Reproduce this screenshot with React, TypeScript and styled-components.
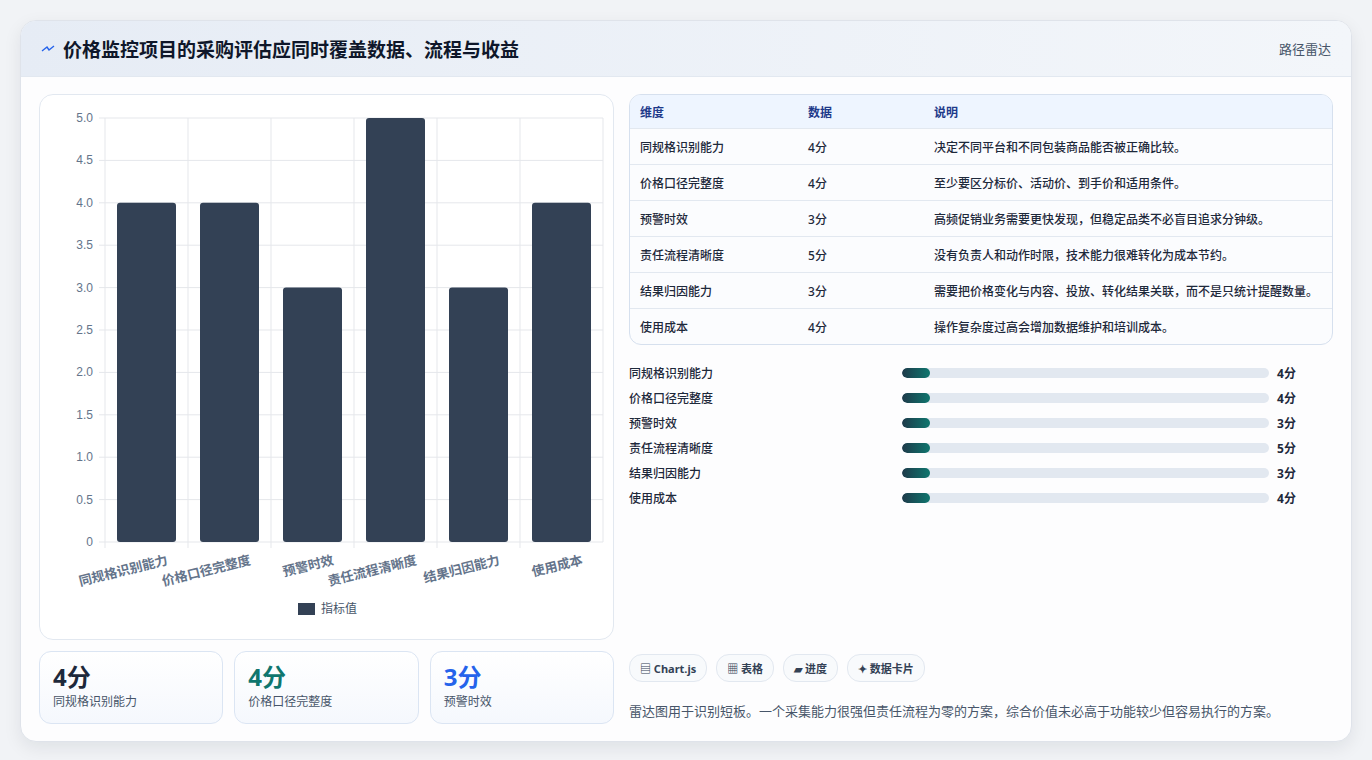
import React from 'react'
import styled, { createGlobalStyle } from 'styled-components'

const rows = [
  { name: '同规格识别能力', score: 4, note: '决定不同平台和不同包装商品能否被正确比较。' },
  { name: '价格口径完整度', score: 4, note: '至少要区分标价、活动价、到手价和适用条件。' },
  { name: '预警时效', score: 3, note: '高频促销业务需要更快发现，但稳定品类不必盲目追求分钟级。' },
  { name: '责任流程清晰度', score: 5, note: '没有负责人和动作时限，技术能力很难转化为成本节约。' },
  { name: '结果归因能力', score: 3, note: '需要把价格变化与内容、投放、转化结果关联，而不是只统计提醒数量。' },
  { name: '使用成本', score: 4, note: '操作复杂度过高会增加数据维护和培训成本。' },
]

const GlobalStyle = createGlobalStyle`
  body {
    margin: 0;
    background: #f1f3f6;
    font-family: "Noto Sans", "Noto Sans CJK SC", sans-serif;
    color: #1e293b;
  }
`

const Page = styled.div`
  padding: 20px;
  height: 760px;
  box-sizing: border-box;
`

const Card = styled.div`
  height: 720px;
  background: #fdfdfe;
  border: 1px solid #dfe3ea;
  border-radius: 16px;
  box-shadow: 0 6px 18px rgba(15, 23, 42, 0.08);
  overflow: hidden;
  display: flex;
  flex-direction: column;
`

const Header = styled.div`
  height: 55px;
  flex-shrink: 0;
  display: flex;
  align-items: center;
  justify-content: space-between;
  padding: 0 20px;
  background: linear-gradient(90deg, #e6ecf5, #f3f6fa);
  border-bottom: 1px solid #e2e8f0;
`

const Title = styled.h1`
  margin: 0;
  font-size: 19px;
  font-weight: 700;
  color: #0f172a;
  display: flex;
  align-items: center;
  gap: 8px;
`

const Tag = styled.span`
  font-size: 13px;
  color: #475569;
`

const Body = styled.div`
  flex: 1;
  display: grid;
  grid-template-columns: 575px 1fr;
  gap: 15px;
  padding: 17px 18px 19px;
`

const Col = styled.div`
  display: flex;
  flex-direction: column;
  gap: 11px;
  min-width: 0;
`

const Panel = styled.div`
  height: 544px;
  border: 1px solid #e2e8f0;
  border-radius: 14px;
  background: #fff;
`

const Stats = styled.div`
  display: grid;
  grid-template-columns: repeat(3, 1fr);
  gap: 11px;
`

const Stat = styled.div`
  height: 73px;
  box-sizing: border-box;
  border: 1px solid #dbe5f3;
  border-radius: 12px;
  background: linear-gradient(180deg, #ffffff, #f5f8fd);
  padding: 10px 13px;
`

const StatValue = styled.div<{ $c: string }>`
  font-size: 24px;
  font-weight: 700;
  line-height: 30px;
  color: ${(p) => p.$c};
`

const StatLabel = styled.div`
  font-size: 12px;
  color: #475569;
`

const Table = styled.div`
  border: 1px solid #d6e0ee;
  border-radius: 12px;
  overflow: hidden;
  background: #fbfcfe;
`

const TRow = styled.div<{ $head?: boolean }>`
  display: grid;
  grid-template-columns: 168px 126px 1fr;
  height: ${(p) => (p.$head ? 33 : 35)}px;
  align-items: center;
  padding: 0 10px;
  font-size: 12px;
  font-weight: ${(p) => (p.$head ? 700 : 500)};
  color: ${(p) => (p.$head ? '#1e3a8a' : '#1e293b')};
  background: ${(p) => (p.$head ? '#eef5ff' : 'transparent')};
  border-top: ${(p) => (p.$head ? 'none' : '1px solid #e2e8f0')};
`

const Bars = styled.div`
  display: flex;
  flex-direction: column;
  gap: 9px;
  margin-top: 8px;
`

const BarRow = styled.div`
  display: grid;
  grid-template-columns: 265px 367px 1fr;
  align-items: center;
  gap: 0 8px;
  height: 16px;
  font-size: 12px;
  font-weight: 500;
`

const Track = styled.div`
  height: 10px;
  border-radius: 5px;
  background: #e2e8f0;
  overflow: hidden;
`

const Fill = styled.div`
  height: 100%;
  border-radius: 5px;
  background: linear-gradient(90deg, #1e3a4a, #0f766e);
`

const Score = styled.span`
  font-weight: 700;
  font-size: 12px;
`

const Chips = styled.div`
  margin-top: auto;
  display: flex;
  gap: 9px;
`

const Chip = styled.span`
  height: 26px;
  padding: 0 10px;
  display: inline-flex;
  align-items: center;
  border: 1px solid #e2e8f0;
  border-radius: 13px;
  background: #f8fafc;
  font-size: 11px;
  font-weight: 700;
  color: #334155;
`

const Note = styled.p`
  margin: 8px 0 4px;
  font-size: 13px;
  color: #475569;
`

function Chart() {
  const x0 = 65
  const x1 = 563
  const y0 = 447
  const yTop = 23
  const unit = (y0 - yTop) / 5
  const step = (x1 - x0) / 6
  const ticks = [0, 0.5, 1, 1.5, 2, 2.5, 3, 3.5, 4, 4.5, 5]
  return (
    <svg width="575" height="544" viewBox="0 0 575 544">
      {ticks.map((t) => (
        <g key={t}>
          <line x1={x0 - 6} x2={x1} y1={y0 - t * unit} y2={y0 - t * unit} stroke="#e5e7eb" />
          <text x={x0 - 12} y={y0 - t * unit + 4} fontSize="12" fill="#64748b" textAnchor="end" fontFamily="Liberation Sans, sans-serif">
            {t === 0 ? '0' : t.toFixed(1)}
          </text>
        </g>
      ))}
      {rows.map((_, i) => (
        <line key={i} x1={x0 + i * step} x2={x0 + i * step} y1={yTop} y2={y0 + 6} stroke="#e5e7eb" />
      ))}
      <line x1={x1} x2={x1} y1={yTop} y2={y0} stroke="#e5e7eb" />
      {rows.map((r, i) => (
        <rect key={r.name} x={x0 + i * step + 12} y={y0 - r.score * unit} width={59} height={r.score * unit} rx="3" fill="#334155" />
      ))}
      {rows.map((r, i) => {
        const cx = x0 + i * step + step / 2
        return (
          <text key={r.name} x={cx + 22} y={y0 + 22} fontSize="13" fontWeight="600" fill="#64748b" textAnchor="end" transform={`rotate(-14 ${cx + 22} ${y0 + 22})`}>
            {r.name}
          </text>
        )
      })}
      <rect x="258" y="508" width="17" height="12" fill="#334155" />
      <text x="281" y="518" fontSize="12" fill="#475569">指标值</text>
    </svg>
  )
}

export default function App() {
  const colors = ['#1e293b', '#0f766e', '#2563eb']
  return (
    <Page>
      <GlobalStyle />
      <Card>
        <Header>
          <Title>
            <svg width="14" height="10" viewBox="0 0 14 10">
              <path d="M1 7 L6 3 L8 6 L13 2" stroke="#2563eb" strokeWidth="1.4" fill="none" />
            </svg>
            价格监控项目的采购评估应同时覆盖数据、流程与收益
          </Title>
          <Tag>路径雷达</Tag>
        </Header>
        <Body>
          <Col>
            <Panel>
              <Chart />
            </Panel>
            <Stats>
              {rows.slice(0, 3).map((r, i) => (
                <Stat key={r.name}>
                  <StatValue $c={colors[i]}>{r.score}分</StatValue>
                  <StatLabel>{r.name}</StatLabel>
                </Stat>
              ))}
            </Stats>
          </Col>
          <Col>
            <Table>
              <TRow $head>
                <span>维度</span>
                <span>数据</span>
                <span>说明</span>
              </TRow>
              {rows.map((r) => (
                <TRow key={r.name}>
                  <span>{r.name}</span>
                  <span>{r.score}分</span>
                  <span>{r.note}</span>
                </TRow>
              ))}
            </Table>
            <Bars>
              {rows.map((r) => (
                <BarRow key={r.name}>
                  <span>{r.name}</span>
                  <Track>
                    <Fill style={{ width: 28 }} />
                  </Track>
                  <Score>{r.score}分</Score>
                </BarRow>
              ))}
            </Bars>
            <Chips>
              <Chip>▤ Chart.js</Chip>
              <Chip>▦ 表格</Chip>
              <Chip>▰ 进度</Chip>
              <Chip>✦ 数据卡片</Chip>
            </Chips>
            <Note>雷达图用于识别短板。一个采集能力很强但责任流程为零的方案，综合价值未必高于功能较少但容易执行的方案。</Note>
          </Col>
        </Body>
      </Card>
    </Page>
  )
}
